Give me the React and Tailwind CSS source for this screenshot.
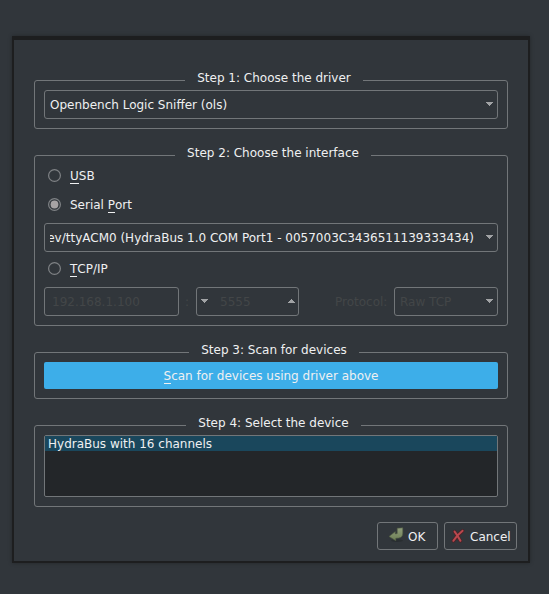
import React from "react";

function Group({ title, gap, className, children }) {
  return (
    <section className={`rounded-[3px] border border-[#727679] px-[9px] ${className}`}>
      <h2 className={`-mt-[11px] h-4 bg-[#31363b] text-center leading-4 ${gap}`}>{title}</h2>
      <div className="mt-1">{children}</div>
    </section>
  );
}

function Down() {
  return (
    <svg className="-mt-px h-1 w-[7px] shrink-0" viewBox="0 0 7 4" fill="#a1a3a5" shapeRendering="crispEdges">
      <path d="M0 0h7v1H0zM1 1h5v1H1zM2 2h3v1H2zM3 3h1v1H3z" />
    </svg>
  );
}

function Up() {
  return (
    <svg className="-mt-px h-1 w-[7px] shrink-0" viewBox="0 0 7 4" fill="#a1a3a5" shapeRendering="crispEdges">
      <path d="M3 0h1v1H3zM2 1h3v1H2zM1 2h5v1H1zM0 3h7v1H0z" />
    </svg>
  );
}

function Key({ children }) {
  return <span className="inline-block h-[15px] border-b border-[#eff0f1] leading-[15px]">{children}</span>;
}

function Radio({ checked, className, children }) {
  return (
    <div className={`flex h-[15px] items-center pl-1 ${className}`}>
      <svg className="h-[13px] w-[13px] shrink-0" viewBox="0 0 13 13">
        <circle cx="6.5" cy="6.5" r="5.9" fill="none" stroke="#7f8285" strokeWidth="1.2" />
        {checked && <circle cx="6.5" cy="6.5" r="3.9" fill="#a7a3a4" />}
      </svg>
      <span className="mt-0.5 ml-[9px] leading-[15px]">{children}</span>
    </div>
  );
}

const box = "flex h-[29px] items-center rounded-[3px] border border-[#727679]";

export default function App() {
  return (
    <div className="h-[594px] w-[549px] overflow-hidden bg-[#31363b] pt-9 pl-3 font-['DejaVu_Sans',sans-serif] text-[12px] leading-[15px] whitespace-nowrap text-[#eff0f1]">
      <main className="h-[527px] w-[518px] border-x-2 border-t-4 border-b-2 border-[#1d1e1f] bg-[#31363b] pt-10 pr-5 pl-5 shadow-[0_0_4px_rgba(0,0,0,0.3)]">
        <Group title="Step 1: Choose the driver" gap="ml-[141px] w-[178px]" className="h-[49px]">
          <div className={`${box} justify-between pr-1 pl-[5px]`}>
            <span className="pt-px">Openbench Logic Sniffer (ols)</span>
            <Down />
          </div>
        </Group>

        <Group title="Step 2: Choose the interface" gap="ml-[131px] w-[196px]" className="mt-[26px] h-[171px]">
          <div className="pt-[3px]">
            <Radio><Key>U</Key>SB</Radio>
            <Radio checked className="mt-[14px]">Serial <Key>P</Key>ort</Radio>
            <div className={`${box} mt-[11px] justify-between pr-1 pl-[5px]`}>
              <div className="flex w-[424px] justify-end overflow-hidden pt-px">
                <span>/dev/ttyACM0 (HydraBus 1.0 COM Port1 - 0057003C3436511139333434)</span>
              </div>
              <Down />
            </div>
            <Radio className="mt-[9px]"><Key>T</Key>CP/IP</Radio>
            <div className="mt-[11px] flex items-center text-[#434648]">
              <div className={`${box} w-[135px] pl-[7px]`}><span className="pt-px">192.168.1.100</span></div>
              <span className="w-[17px] pt-px pl-[6px]">:</span>
              <div className={`${box} w-[103px] pr-[3px] pl-1`}>
                <Down />
                <span className="ml-[12px] flex-1 pt-px">5555</span>
                <Up />
              </div>
              <span className="ml-9 w-[59px] pt-px">Protocol:</span>
              <div className={`${box} w-[104px] justify-between pr-1 pl-[5px]`}>
                <span className="pt-px">Raw TCP</span>
                <Down />
              </div>
            </div>
          </div>
        </Group>

        <Group title="Step 3: Scan for devices" gap="ml-[145px] w-[170px]" className="mt-[26px] h-[47px]">
          <button className="flex h-[27px] w-full items-center justify-center rounded-[2px] bg-[#3daee9]">
            <span className="pt-0.5"><Key>S</Key>can for devices using driver above</span>
          </button>
        </Group>

        <Group title="Step 4: Select the device" gap="ml-[142px] w-[175px]" className="mt-[26px] h-[82px]">
          <div className="h-[62px] rounded-[2px] border border-[#727679] bg-[#232629]">
            <div className="h-[15px] bg-[#1a475c] pl-[3px] leading-[17px]">HydraBus with 16 channels</div>
          </div>
        </Group>

        <div className="mt-[15px] -mr-[9px] flex justify-end gap-1.5">
          <button className="flex h-7 w-[61px] items-center rounded-[3px] border border-[#727679] pl-[10px]">
            <svg className="-mt-0.5 h-4 w-4 shrink-0" viewBox="0 0 16 16">
              <defs>
                <linearGradient id="enter" x1="0" y1="0" x2="0" y2="1">
                  <stop offset="0" stopColor="#8f9c7b" />
                  <stop offset="1" stopColor="#6d7f55" />
                </linearGradient>
              </defs>
              <ellipse cx="9" cy="13.6" rx="6" ry="1.3" fill="#292e31" />
              <path d="M9.2 1.2l5.6-.4v5.4c0 2.9-1.6 4.5-4.2 4.9l-2.8.2v2.4L1 9.4l6.3-4.8v2.3l1.9-.3z" fill="url(#enter)" stroke="#4c573f" strokeWidth=".6" />
            </svg>
            <span className="ml-[4px] pt-0.5">OK</span>
          </button>
          <button className="flex h-7 w-[73px] items-center rounded-[3px] border border-[#727679] pl-[5px]">
            <svg className="-mt-px h-4 w-4 shrink-0" viewBox="0 0 16 16" fill="none" strokeLinecap="round">
              <path d="M4.6 3.6c2 2.5 4 5.6 5.8 9.2M12.6 2.8C9.5 5.3 5.8 9 3.4 12.8" stroke="#4b2429" strokeWidth="3.6" />
              <path d="M4.6 3.6c2 2.5 4 5.6 5.8 9.2M12.6 2.8C9.5 5.3 5.8 9 3.4 12.8" stroke="#b9484e" strokeWidth="2" />
            </svg>
            <span className="ml-1 pt-0.5">Cancel</span>
          </button>
        </div>
      </main>
    </div>
  );
}
